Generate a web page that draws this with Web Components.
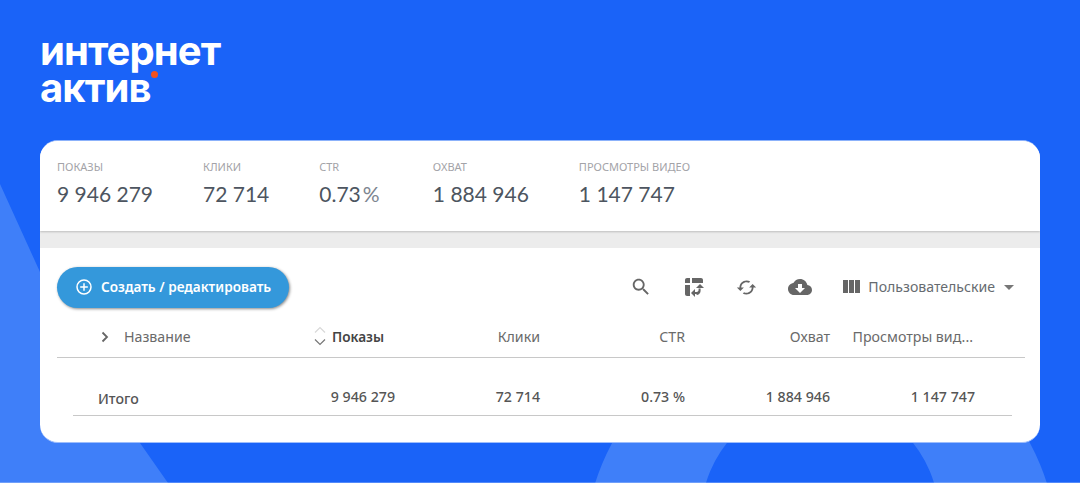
<!DOCTYPE html>
<html lang="ru">
<head>
<meta charset="utf-8">
<title>Интернет актив</title>
<style>
  html, body { margin: 0; height: 100%; }
  body { background: #1a63f8; font-family: "Noto Sans", sans-serif; overflow: hidden; }
</style>
</head>
<body>
<report-page>
  <brand-logo slot="logo"></brand-logo>
  <stat-panel>
    <stat-item label="Показы" value="9 946 279"></stat-item>
    <stat-item label="Клики" value="72 714"></stat-item>
    <stat-item label="CTR" value="0.73" unit="%"></stat-item>
    <stat-item label="Охват" value="1 884 946"></stat-item>
    <stat-item label="Просмотры видео" value="1 147 747"></stat-item>
  </stat-panel>
  <report-toolbar></report-toolbar>
  <report-table></report-table>
</report-page>

<script>
const html = String.raw;

function define(name, markup, init) {
  customElements.define(name, class extends HTMLElement {
    constructor() {
      super();
      this.attachShadow({ mode: "open" }).innerHTML = markup;
    }
    connectedCallback() {
      init?.(this);
    }
  });
}

define("report-page", html`
  <style>
    :host { display: block; position: relative; width: 1080px; height: 483px; overflow: hidden; }
    .shapes { position: absolute; inset: 0; }
    .wrap { position: relative; display: flex; flex-direction: column; height: 100%; padding: 32px 40px 40px; box-sizing: border-box; }
    .card { margin-top: auto; height: 303px; box-sizing: border-box; background: #fff; border-radius: 18px; overflow: hidden; display: flex; flex-direction: column; border-top: 1px solid #8cb2fb; border-bottom: 1px solid #9dbdfc; }
  </style>
  <svg class="shapes" width="1080" height="483" viewBox="0 0 1080 483">
    <path fill="#3f7ff9" d="M0 184 L40 272 Q90 370 140 443 L168 483 L0 483 Z"/>
    <path fill="#3f7ff9" fill-rule="evenodd" d="M584 555a237 237 0 1 0 474 0a237 237 0 1 0 -474 0Z M701 517a119 119 0 1 0 238 0a119 119 0 1 0 -238 0Z"/>
    <rect y="482" width="1080" height="1" fill="#fff" opacity=".25"/>
  </svg>
  <div class="wrap">
    <slot name="logo"></slot>
    <div class="card"><slot></slot></div>
  </div>
`);

define("brand-logo", html`
  <style>
    :host { display: block; position: relative; width: max-content; color: #fff; font: 700 40px/37px Inter, sans-serif; letter-spacing: -0.9px; }
    i { position: absolute; left: 111px; top: 39px; width: 7px; height: 7px; border-radius: 50%; background: #f4511e; }
  </style>
  <div>интернет<br>актив</div>
  <i></i>
`);

define("stat-panel", html`
  <style>
    :host { display: flex; flex: none; height: 90px; box-sizing: border-box; padding: 19px 17px 0; gap: 50px; background: #fff; box-shadow: 0 1px 2px #bdbdbd; position: relative; }
  </style>
  <slot></slot>
`);

define("stat-item", html`
  <style>
    :host { display: block; }
    .label { font: 400 11px/14px "Noto Sans", sans-serif; text-transform: uppercase; color: #a3a3a8; }
    .value { font: 400 21px/30px Lato, "Noto Sans", sans-serif; color: #4d5560; margin-top: 5px; white-space: pre; }
    .unit { color: #7d8590; margin: 0 3.2px 0 2px; }
  </style>
  <div class="label"></div>
  <div class="value"><span class="num"></span><span class="unit"></span></div>
`, (el) => {
  const root = el.shadowRoot;
  root.querySelector(".label").textContent = el.getAttribute("label");
  root.querySelector(".num").textContent = el.getAttribute("value");
  const unit = root.querySelector(".unit");
  if (el.hasAttribute("unit")) {
    unit.textContent = el.getAttribute("unit");
  } else {
    unit.remove();
  }
});

define("report-toolbar", html`
  <style>
    :host { display: flex; align-items: center; flex: none; margin-top: 17px; height: 78px; box-sizing: border-box; padding: 0 26px 0 17px; background: #fff; box-shadow: 0 -17px 0 #ececec; }
    .create { display: flex; align-items: center; gap: 8px; height: 41px; width: 232px; box-sizing: border-box; padding-left: 18px; border-radius: 21px; background: #3498db; color: #fff; font: 600 13.6px/1 "Noto Sans", sans-serif; box-shadow: 1px 1px 3px #8a8a8a; }
    .tools { display: flex; align-items: center; margin-left: auto; color: #666; gap: 30px; }
    .group { display: flex; align-items: center; }
    svg { display: block; fill: currentColor; }
    .view { font: 400 14.1px/1 "Noto Sans", sans-serif; color: #666b70; margin-left: 5px; }
    .caret { width: 0; height: 0; margin-left: 9px; border: 5px solid transparent; border-top: 5px solid #777; border-bottom: 0; }
  </style>
  <div class="create">
    <svg width="18" height="18" viewBox="0 0 18 18"><circle cx="9" cy="9" r="7" fill="none" stroke="#fff" stroke-width="1.5"/><path d="M9 5.2v7.6M5.2 9h7.6" stroke="#fff" stroke-width="1.5"/></svg>
    <span>Создать / редактировать</span>
  </div>
  <div class="tools">
    <svg width="22" height="22" viewBox="0 0 24 24"><path d="M15.5 14h-.79l-.28-.27C15.41 12.59 16 11.11 16 9.5 16 5.91 13.09 3 9.5 3S3 5.91 3 9.5 5.91 16 9.5 16c1.61 0 3.09-.59 4.23-1.57l.27.28v.79l5 4.99L20.49 19l-4.99-5zm-6 0C7.01 14 5 11.99 5 9.5S7.01 5 9.5 5 14 7.01 14 9.5 11.99 14 9.5 14z"/></svg>
    <svg width="24" height="24" viewBox="0 0 24 24"><path d="M10 8h11V5c0-1.100-.9-2-2-2h-9v5zM3 8h5V3H5c-1.100 0-2 .9-2 2v3zm2 13h3V10H3v9c0 1.100.9 2 2 2zm8 1l-4-4 4-4zm1-9l4-4 4 4zm.58 6H13v-2h1.580c1.100 0 2-.9 2-2v-1.420h2V16c0 2.210-1.790 4-4 4z"/></svg>
    <svg width="21" height="21" viewBox="0 0 24 24" style="margin-right:1px"><path d="M19 8l-4 4h3c0 3.310-2.690 6-6 6-1.010 0-1.970-.25-2.800-.7l-1.460 1.460C8.970 19.540 10.430 20 12 20c4.420 0 8-3.580 8-8h3l-4-4zM6 12c0-3.310 2.690-6 6-6 1.010 0 1.970.25 2.800.7l1.460-1.460C15.030 4.460 13.570 4 12 4c-4.420 0-8 3.580-8 8H1l4 4 4-4H6z"/></svg>
    <svg width="24" height="24" viewBox="0 0 24 24"><path d="M19.35 10.04C18.67 6.590 15.64 4 12 4 9.110 4 6.600 5.640 5.350 8.040 2.340 8.360 0 10.910 0 14c0 3.310 2.690 6 6 6h13c2.760 0 5-2.240 5-5 0-2.640-2.050-4.780-4.650-4.960zM17 13l-5 5-5-5h3V9h4v4h3z"/></svg>
    <div class="group" style="margin-left:-3px">
      <svg width="24" height="24" viewBox="0 0 24 24"><path d="M10 18h5V5h-5v13zm-6 0h5V5H4v13zM16 5v13h5V5h-5z"/></svg>
      <span class="view">Пользовательские</span>
      <span class="caret"></span>
    </div>
  </div>
`);

define("report-table", html`
  <style>
    :host { display: block; padding: 0 15px 0 17px; font: 400 14.2px/18px "Noto Sans", sans-serif; color: #6a6a6a; }
    .row { display: grid; box-sizing: border-box; }
    .head { grid-template-columns: 245px 93px 145px 145px 145px 145px 50px; height: 32px; padding-top: 2px; align-items: start; border-bottom: 1px solid #c8c8c8; }
    .body { grid-template-columns: 229px 93px 145px 145px 145px 145px 37px; height: 58px; margin: 0 13px 0 16px; padding-top: 30px; border-bottom: 1px solid #c8c8c8; color: #555; font-weight: 500; }
    .name { display: flex; align-items: center; height: 18px; }
    .name svg { margin: 0 14px 0 43px; }
    .sort { display: flex; align-items: center; height: 18px; gap: 6px; padding-left: 12px; font: 600 13.6px/18px "Noto Sans", sans-serif; color: #444; }
    .sort svg { margin: -2px 0; }
    .total { margin: 2px 0 0 25px; }
    .cell { text-align: right; white-space: nowrap; }
    .trim { margin-right: 2px; }
    svg { display: block; fill: none; stroke: #666; }
  </style>
  <div class="row head">
    <span class="name">
      <svg width="10" height="12" viewBox="0 0 10 12"><path d="M2.5 1.500 7 6l-4.500 4.500" stroke-width="1.8"/></svg>
      Название
    </span>
    <span class="sort">
      <svg width="12" height="22" viewBox="0 0 12 22"><path d="M1 6.500 6 1.500l5 5" stroke="#d8d8d8" stroke-width="1.2"/><path d="M1 13.500l5 5 5-5" stroke="#777" stroke-width="1.2"/></svg>
      Показы
    </span>
    <span class="cell">Клики</span>
    <span class="cell">CTR</span>
    <span class="cell">Охват</span>
    <span class="cell trim">Просмотры вид...</span>
  </div>
  <div class="row body">
    <span class="total">Итого</span>
    <span class="cell">9 946 279</span>
    <span class="cell">72 714</span>
    <span class="cell">0.73 %</span>
    <span class="cell">1 884 946</span>
    <span class="cell">1 147 747</span>
  </div>
`);
</script>
</body>
</html>
